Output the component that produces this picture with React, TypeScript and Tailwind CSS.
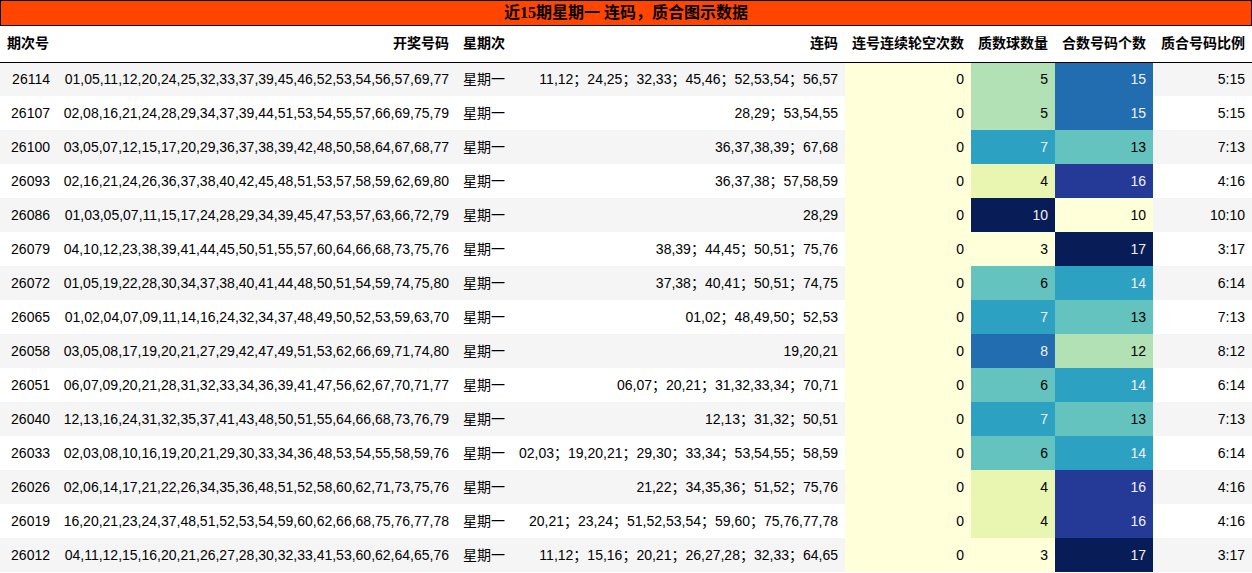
import React from "react";

type Row = [string, string, string, number, number, number, string];

const rows: Row[] = [
  ["26114", "01,05,11,12,20,24,25,32,33,37,39,45,46,52,53,54,56,57,69,77", "11,12；24,25；32,33；45,46；52,53,54；56,57", 0, 5, 15, "5:15"],
  ["26107", "02,08,16,21,24,28,29,34,37,39,44,51,53,54,55,57,66,69,75,79", "28,29；53,54,55", 0, 5, 15, "5:15"],
  ["26100", "03,05,07,12,15,17,20,29,36,37,38,39,42,48,50,58,64,67,68,77", "36,37,38,39；67,68", 0, 7, 13, "7:13"],
  ["26093", "02,16,21,24,26,36,37,38,40,42,45,48,51,53,57,58,59,62,69,80", "36,37,38；57,58,59", 0, 4, 16, "4:16"],
  ["26086", "01,03,05,07,11,15,17,24,28,29,34,39,45,47,53,57,63,66,72,79", "28,29", 0, 10, 10, "10:10"],
  ["26079", "04,10,12,23,38,39,41,44,45,50,51,55,57,60,64,66,68,73,75,76", "38,39；44,45；50,51；75,76", 0, 3, 17, "3:17"],
  ["26072", "01,05,19,22,28,30,34,37,38,40,41,44,48,50,51,54,59,74,75,80", "37,38；40,41；50,51；74,75", 0, 6, 14, "6:14"],
  ["26065", "01,02,04,07,09,11,14,16,24,32,34,37,48,49,50,52,53,59,63,70", "01,02；48,49,50；52,53", 0, 7, 13, "7:13"],
  ["26058", "03,05,08,17,19,20,21,27,29,42,47,49,51,53,62,66,69,71,74,80", "19,20,21", 0, 8, 12, "8:12"],
  ["26051", "06,07,09,20,21,28,31,32,33,34,36,39,41,47,56,62,67,70,71,77", "06,07；20,21；31,32,33,34；70,71", 0, 6, 14, "6:14"],
  ["26040", "12,13,16,24,31,32,35,37,41,43,48,50,51,55,64,66,68,73,76,79", "12,13；31,32；50,51", 0, 7, 13, "7:13"],
  ["26033", "02,03,08,10,16,19,20,21,29,30,33,34,36,48,53,54,55,58,59,76", "02,03；19,20,21；29,30；33,34；53,54,55；58,59", 0, 6, 14, "6:14"],
  ["26026", "02,06,14,17,21,22,26,34,35,36,48,51,52,58,60,62,71,73,75,76", "21,22；34,35,36；51,52；75,76", 0, 4, 16, "4:16"],
  ["26019", "16,20,21,23,24,37,48,51,52,53,54,59,60,62,66,68,75,76,77,78", "20,21；23,24；51,52,53,54；59,60；75,76,77,78", 0, 4, 16, "4:16"],
  ["26012", "04,11,12,15,16,20,21,26,27,28,30,32,33,41,53,60,62,64,65,76", "11,12；15,16；20,21；26,27,28；32,33；64,65", 0, 3, 17, "3:17"],
];

const primeCell: Record<number, string> = {
  3: "bg-[#ffffd9] text-black",
  4: "bg-[#e8f6b1] text-black",
  5: "bg-[#b2e1b6] text-black",
  6: "bg-[#64c3bf] text-black",
  7: "bg-[#2ca1c2] text-[#f1f1f1]",
  8: "bg-[#216daf] text-[#f1f1f1]",
  10: "bg-[#081d58] text-[#f1f1f1]",
};

const compositeCell: Record<number, string> = {
  10: "bg-[#ffffd9] text-black",
  12: "bg-[#b2e1b6] text-black",
  13: "bg-[#64c3bf] text-black",
  14: "bg-[#2ca1c2] text-[#f1f1f1]",
  15: "bg-[#216daf] text-[#f1f1f1]",
  16: "bg-[#253a97] text-[#f1f1f1]",
  17: "bg-[#081d58] text-[#f1f1f1]",
};

const headers = ["期次号", "开奖号码", "星期次", "连码", "连号连续轮空次数", "质数球数量", "合数号码个数", "质合号码比例"];

export default function App() {
  return (
    <div className="w-[1252px] h-[573px] overflow-hidden bg-white text-black text-[14px] font-['Liberation_Sans','Noto_Sans_CJK_SC',sans-serif]">
      <div className="h-[26px] border border-black bg-[#ff4500] flex items-center justify-center font-bold text-[16px] font-['Liberation_Serif','Noto_Sans_CJK_SC',serif]">
        近15期星期一 连码，质合图示数据
      </div>
      <table className="w-[1252px] table-fixed border-collapse">
        <colgroup>
          <col className="w-[56px]" />
          <col className="w-[400px]" />
          <col className="w-[56px]" />
          <col className="w-[333px]" />
          <col className="w-[126px]" />
          <col className="w-[84px]" />
          <col className="w-[98px]" />
          <col className="w-[99px]" />
        </colgroup>
        <thead>
          <tr className="h-[36px] border-b border-black">
            {headers.map((h) => (
              <th key={h} className="text-right font-bold px-[7px] whitespace-nowrap">
                {h}
              </th>
            ))}
          </tr>
        </thead>
        <tbody>
          {rows.map((r, i) => (
            <tr key={r[0]} className={i % 2 === 0 ? "h-[34px] bg-[#f5f5f5]" : "h-[34px] bg-white"}>
              <td className="text-right px-[6px]">{r[0]}</td>
              <td className="text-right px-[7px] whitespace-nowrap">{r[1]}</td>
              <td className="text-right px-[7px] whitespace-nowrap">星期一</td>
              <td className="text-right px-[7px] whitespace-nowrap">{r[2]}</td>
              <td className="text-right px-[7px] bg-[#ffffd9]">{r[3]}</td>
              <td className={"text-right px-[7px] " + primeCell[r[4]]}>{r[4]}</td>
              <td className={"text-right px-[7px] " + compositeCell[r[5]]}>{r[5]}</td>
              <td className="text-right px-[7px]">{r[6]}</td>
            </tr>
          ))}
        </tbody>
      </table>
    </div>
  );
}
